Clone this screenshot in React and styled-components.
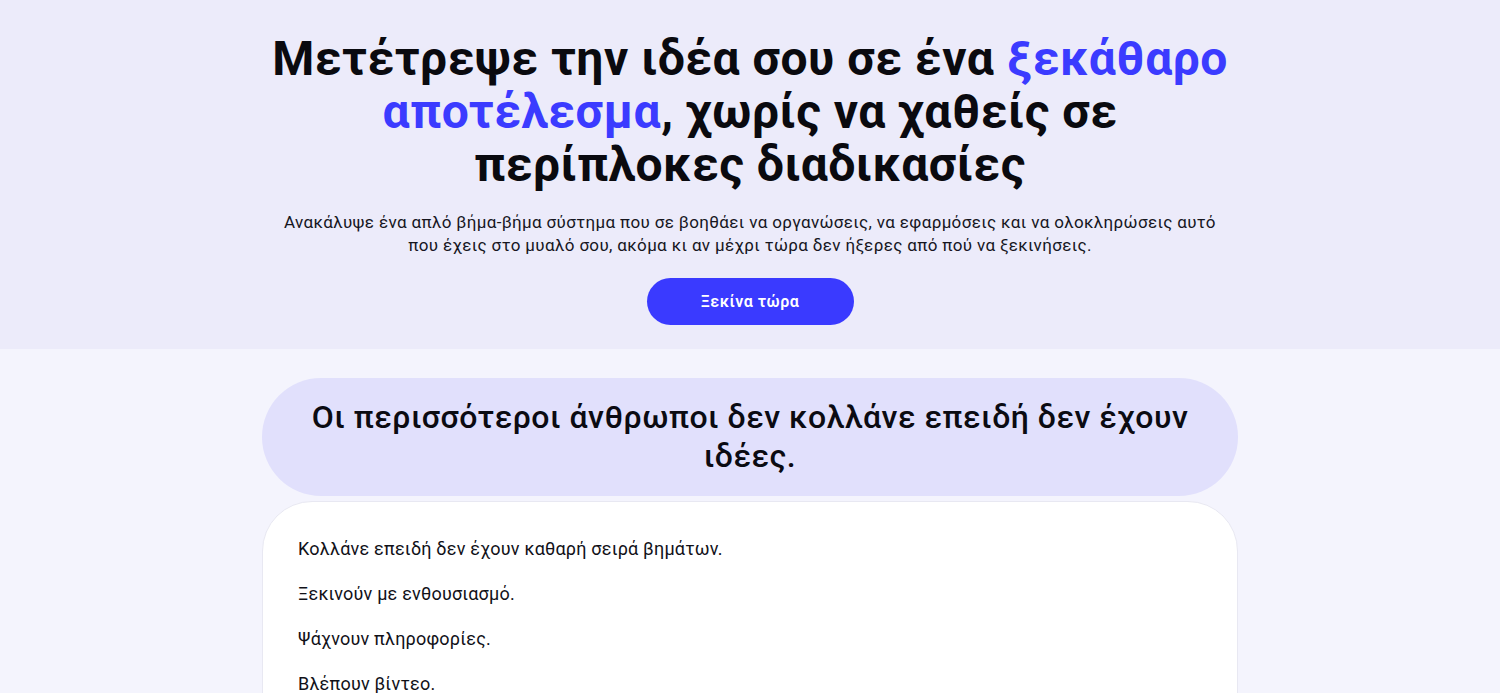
import React from "react";
import styled, { createGlobalStyle } from "styled-components";

const Global = createGlobalStyle`
  html, body { margin: 0; padding: 0; }
  body {
    font-family: Roboto, "Noto Sans", "Liberation Sans", sans-serif;
    background: #f4f4fd;
    color: #0b0b12;
    -webkit-font-smoothing: antialiased;
  }
  * { box-sizing: border-box; }
`;

const Hero = styled.section`
  background: #ecebfa;
  padding: 32px 24px 24px;
  display: flex;
  flex-direction: column;
  align-items: center;
  text-align: center;
`;

const Title = styled.h1`
  margin: 0;
  max-width: 980px;
  font-size: 48px;
  line-height: 53px;
  font-weight: 700;
  letter-spacing: 0.5px;
  color: #0a0a0f;
`;

const Accent = styled.span`
  color: #3b3bff;
`;

const Lead = styled.p`
  margin: 20px 0 0;
  max-width: 940px;
  font-size: 17px;
  line-height: 23px;
  font-weight: 400;
  letter-spacing: 0.35px;
  color: #16161e;
`;

const Cta = styled.button`
  margin-top: 21px;
  width: 207px;
  height: 47px;
  border: none;
  border-radius: 999px;
  background: #3a3aff;
  color: #fff;
  font-family: inherit;
  font-size: 16px;
  font-weight: 600;
  letter-spacing: 0.5px;
  cursor: pointer;
`;

const Main = styled.section`
  padding: 29px 24px 40px;
  display: flex;
  flex-direction: column;
  align-items: center;
  gap: 5px;
`;

const Pill = styled.div`
  width: 976px;
  background: #e1e0fc;
  border-radius: 60px;
  padding: 20px 40px;
  text-align: center;
`;

const PillTitle = styled.h2`
  margin: 0;
  font-size: 32px;
  line-height: 39px;
  font-weight: 500;
  letter-spacing: 0.5px;
  color: #0b0b12;
`;

const Card = styled.div`
  width: 976px;
  background: #ffffff;
  border: 1px solid #e8e8f2;
  border-radius: 50px;
  padding: 33px 35px 40px;
  display: flex;
  flex-direction: column;
  gap: 18px;
`;

const Item = styled.p`
  margin: 0;
  font-size: 18px;
  line-height: 27px;
  letter-spacing: 0.2px;
  color: #111118;
`;

const items = [
  "Κολλάνε επειδή δεν έχουν καθαρή σειρά βημάτων.",
  "Ξεκινούν με ενθουσιασμό.",
  "Ψάχνουν πληροφορίες.",
  "Βλέπουν βίντεο.",
  "Σώζουν σημειώσεις.",
];

export default function App() {
  return (
    <>
      <Global />
      <Hero>
        <Title>
          Μετέτρεψε την ιδέα σου σε ένα <Accent>ξεκάθαρο αποτέλεσμα</Accent>, χωρίς να χαθείς σε
          περίπλοκες διαδικασίες
        </Title>
        <Lead>
          Ανακάλυψε ένα απλό βήμα-βήμα σύστημα που σε βοηθάει να οργανώσεις, να εφαρμόσεις και να
          ολοκληρώσεις αυτό που έχεις στο μυαλό σου, ακόμα κι αν μέχρι τώρα δεν ήξερες από πού να
          ξεκινήσεις.
        </Lead>
        <Cta>Ξεκίνα τώρα</Cta>
      </Hero>
      <Main>
        <Pill>
          <PillTitle>Οι περισσότεροι άνθρωποι δεν κολλάνε επειδή δεν έχουν ιδέες.</PillTitle>
        </Pill>
        <Card>
          {items.map((t) => (
            <Item key={t}>{t}</Item>
          ))}
        </Card>
      </Main>
    </>
  );
}
